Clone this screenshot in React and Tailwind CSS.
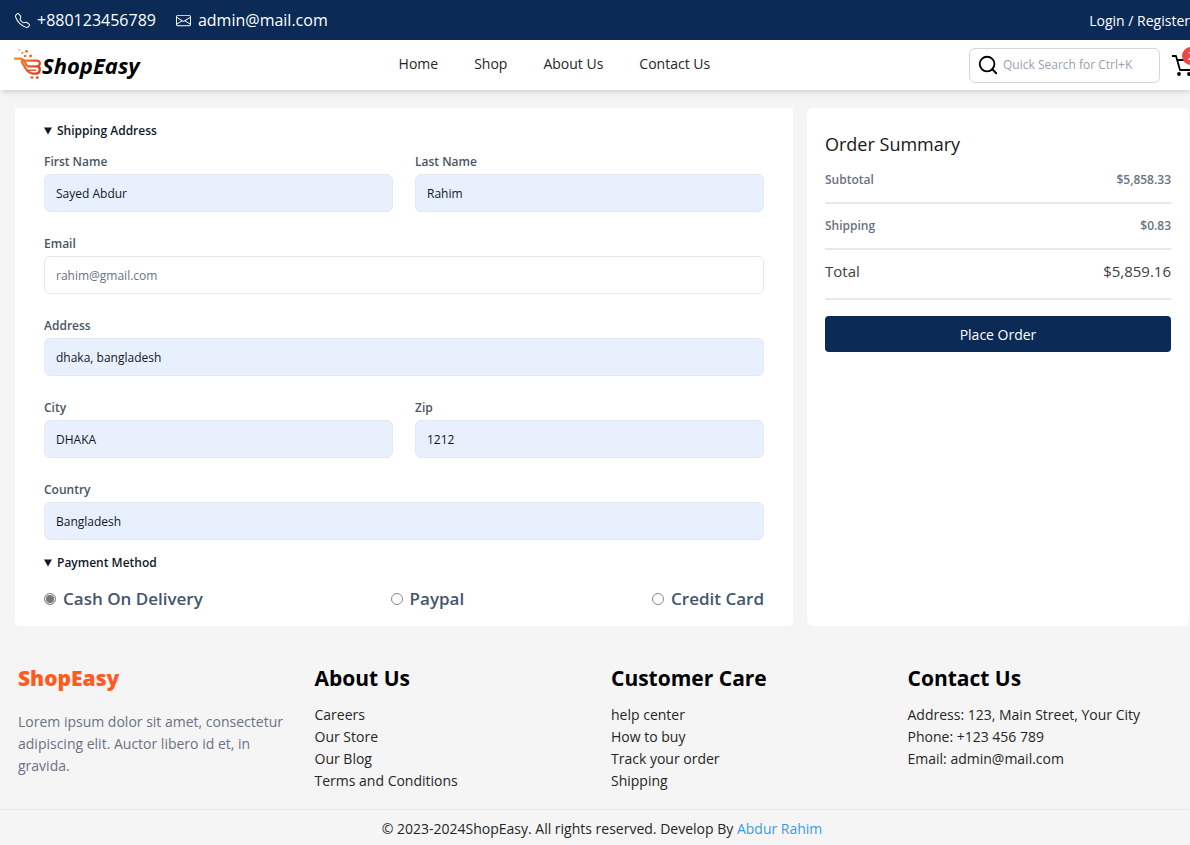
import { BsTelephone, BsEnvelope } from "react-icons/bs";
import { FiSearch } from "react-icons/fi";

const navLinks = ["Home", "Shop", "About Us", "Contact Us"];

const aboutLinks = ["Careers", "Our Store", "Our Blog", "Terms and Conditions"];
const careLinks = ["help center", "How to buy", "Track your order", "Shipping"];
const contactLines = [
  "Address: 123, Main Street, Your City",
  "Phone: +123 456 789",
  "Email: admin@mail.com",
];

function LogoMark() {
  return (
    <svg viewBox="0 0 28 32" className="h-8 w-7 shrink-0" fill="none" aria-hidden="true">
      <defs>
        <linearGradient id="cart" x1="0" y1="0" x2="28" y2="16" gradientUnits="userSpaceOnUse">
          <stop offset="0" stopColor="#f9a01e" />
          <stop offset="1" stopColor="#e63a24" />
        </linearGradient>
      </defs>
      <path
        d="M0 9.6H6.5C9 9.8 10.2 11.6 11.4 14L13 17"
        stroke="url(#cart)"
        strokeWidth="2.4"
      />
      <path
        d="M7 11.6H22.5C25.4 11.6 26 13.2 25.8 14.8C25.5 16.6 24.6 17.4 23 17.4H13M23 17.4C25.4 17.8 26 19.2 25.8 21C25.4 23.6 24.2 24.6 22 24.6H19.5C15.5 24.6 13.6 22.6 11.6 19.4L7.2 12"
        stroke="url(#cart)"
        strokeWidth="2.2"
        strokeLinejoin="round"
      />
      <path d="M14 21.2H22" stroke="url(#cart)" strokeWidth="1.4" />
      <circle cx="18" cy="28.6" r="1.4" fill="#f0602a" />
      <circle cx="23.2" cy="28.6" r="1.4" fill="#e8452a" />
      <circle cx="11.2" cy="7" r="1.3" fill="#f0702a" />
      <circle cx="16.6" cy="7" r="1.4" fill="#ee5f2a" />
      <circle cx="8.4" cy="3.8" r="1.1" fill="#f08a2a" />
      <circle cx="12.6" cy="2.4" r="1.4" fill="#ee6a2a" />
      <circle cx="5.4" cy="0.9" r="0.8" fill="#f08a4a" />
    </svg>
  );
}

function CartIcon() {
  return (
    <svg viewBox="0 0 24 24" className="size-6" fill="none" stroke="#000000" strokeWidth="1.8" aria-hidden="true">
      <path d="M0 3H4L8 17H20.5L23 7H5.5" strokeLinejoin="round" />
      <circle cx="7" cy="21" r="1.9" fill="#000000" stroke="none" />
      <circle cx="17" cy="21" r="1.9" fill="#000000" stroke="none" />
    </svg>
  );
}

function Field({ id, label, value, plain = false, wide = false, type = "text" }) {
  return (
    <div className={wide ? "col-span-2" : ""}>
      <label htmlFor={id} className="mb-[3px] block text-[12px] leading-[18px] font-semibold text-gray-600">
        {label}
      </label>
      <input
        id={id}
        type={type}
        defaultValue={value}
        className={
          plain
            ? "block h-[38px] w-full rounded-md border border-gray-200 bg-white px-[11px] text-[12px] text-gray-500"
            : "block h-[38px] w-full rounded-md border border-[#e2e8f2] bg-[#e8f0fe] px-[11px] text-[12px] text-gray-900"
        }
      />
    </div>
  );
}

function Payment({ id, label, checked }) {
  return (
    <div className="flex items-center gap-[7px]">
      <input
        id={id}
        type="radio"
        name="payment"
        defaultChecked={checked}
        className="size-3 appearance-none rounded-full border border-[#8a8a8a] bg-white checked:bg-[#767676] checked:shadow-[inset_0_0_0_1px_#ffffff]"
      />
      <label htmlFor={id} className="text-[17px] leading-7 font-semibold text-slate-600">
        {label}
      </label>
    </div>
  );
}

function Marker() {
  return (
    <svg viewBox="0 0 8 8" className="size-2" aria-hidden="true">
      <path d="M0 0.5H8L4 7.5Z" fill="#111827" />
    </svg>
  );
}

function Section({ title, className, children }) {
  return (
    <details open className={className}>
      <summary className="flex list-none items-center gap-[5px] text-[12px] leading-5 font-semibold text-gray-900">
        <Marker />
        {title}
      </summary>
      {children}
    </details>
  );
}

function SummaryRow({ label, value }) {
  return (
    <div className="flex justify-between border-b-2 border-gray-200 py-[13px] text-[12px] leading-[18px] font-semibold text-gray-500">
      <span>{label}</span>
      <span>{value}</span>
    </div>
  );
}

function FooterLinks({ title, items }) {
  return (
    <div>
      <h2 className="text-[21px] leading-[30px] font-bold text-black">{title}</h2>
      <ul className="mt-[11px] text-[14px] leading-[22px] text-neutral-800">
        {items.map((item) => (
          <li key={item}>
            <a href="#">{item}</a>
          </li>
        ))}
      </ul>
    </div>
  );
}

export default function App() {
  return (
    <div className="min-h-screen overflow-x-hidden bg-[#f5f5f5] font-['Open_Sans',sans-serif] text-gray-900">
      <div className="flex h-10 items-center justify-between bg-[#0b2a55] pl-[15px] text-white">
        <div className="flex items-center gap-5 text-[16px]">
          <a href="tel:+880123456789" className="flex items-center gap-[7px]">
            <BsTelephone className="size-[15px]" />
            +880123456789
          </a>
          <a href="mailto:admin@mail.com" className="flex items-center gap-[7px]">
            <BsEnvelope className="size-[15px]" />
            admin@mail.com
          </a>
        </div>
        <a href="#" className="text-[14px]">
          Login / Register
        </a>
      </div>

      <header className="relative flex h-[50px] items-center justify-between bg-white pl-[14px] shadow-md">
        <a href="#" className="flex items-center">
          <LogoMark />
          <span className="text-[22px] font-bold text-black italic">ShopEasy</span>
        </a>
        <nav className="flex gap-9 pb-[3px] text-[14px] text-neutral-800">
          {navLinks.map((link) => (
            <a key={link} href="#">
              {link}
            </a>
          ))}
        </nav>
        <div className="-mr-2 flex w-[229px] items-center gap-3">
          <div className="flex h-[35px] w-[191px] shrink-0 items-center gap-1 rounded-md border border-gray-300 px-[7px]">
            <FiSearch className="size-[22px] shrink-0 text-black" />
            <input
              type="search"
              aria-label="Search"
              placeholder="Quick Search for Ctrl+K"
              className="w-full min-w-0 text-[12px] outline-none placeholder:text-gray-400"
            />
          </div>
          <button type="button" aria-label="Cart" className="relative shrink-0">
            <CartIcon />
            <span className="absolute -top-[6px] left-[10px] flex size-[18px] items-center justify-center rounded-full bg-[#ef4444] text-[11px] text-white">
              2
            </span>
          </button>
        </div>
      </header>

      <main className="grid grid-cols-[778fr_382fr] gap-[14px] pt-[18px] pr-px pl-[15px]">
        <form className="rounded bg-white px-[29px] py-[13px]">
          <Section title="Shipping Address">
            <div className="mt-3 grid grid-cols-2 gap-x-[22px] gap-y-[23px]">
              <Field id="first" label="First Name" value="Sayed Abdur" />
              <Field id="last" label="Last Name" value="Rahim" />
              <Field id="email" type="email" label="Email" value="rahim@gmail.com" plain wide />
              <Field id="address" label="Address" value="dhaka, bangladesh" wide />
              <Field id="city" label="City" value="DHAKA" />
              <Field id="zip" label="Zip" value="1212" />
              <Field id="country" label="Country" value="Bangladesh" wide />
            </div>
          </Section>
          <Section title="Payment Method" className="mt-[13px]">
            <div className="mt-3 flex justify-between">
              <Payment id="cash" label="Cash On Delivery" checked />
              <Payment id="paypal" label="Paypal" />
              <Payment id="card" label="Credit Card" />
            </div>
          </Section>
        </form>

        <aside className="rounded-md bg-white px-[18px] pt-[22px]">
          <h2 className="text-[18px] leading-7 font-medium text-neutral-900">Order Summary</h2>
          <SummaryRow label="Subtotal" value="$5,858.33" />
          <SummaryRow label="Shipping" value="$0.83" />
          <div className="flex justify-between border-b-2 border-gray-200 pt-[10px] pb-4 text-[15px] leading-[22px] font-medium text-neutral-700">
            <span>Total</span>
            <span>$5,859.16</span>
          </div>
          <button type="button" className="mt-4 h-9 w-full rounded-sm bg-[#0b2a55] text-[14px] text-white">
            Place Order
          </button>
        </aside>
      </main>

      <footer className="pt-[37px]">
        <div className="grid grid-cols-4 gap-8 px-[18px] pb-[17px]">
          <div>
            <h2 className="text-[21px] leading-[30px] font-extrabold text-[#ff5a1f]">ShopEasy</h2>
            <p className="mt-[18px] -mr-4 text-[14px] leading-[22px] text-gray-500">
              Lorem ipsum dolor sit amet, consectetur adipiscing elit. Auctor libero id et, in gravida.
            </p>
          </div>
          <FooterLinks title="About Us" items={aboutLinks} />
          <FooterLinks title="Customer Care" items={careLinks} />
          <div>
            <h2 className="text-[21px] leading-[30px] font-bold text-black">Contact Us</h2>
            <address className="mt-[11px] text-[14px] leading-[22px] text-neutral-800 not-italic">
              {contactLines.map((line) => (
                <p key={line}>{line}</p>
              ))}
            </address>
          </div>
        </div>
        <p className="border-t border-gray-200 pt-2 pb-[5px] pl-[14px] text-center text-[14px] leading-[22px] text-neutral-800">
          © 2023-2024ShopEasy. All rights reserved. Develop By{" "}
          <a href="#" className="text-[#3b9ddd]">
            Abdur Rahim
          </a>
        </p>
      </footer>
    </div>
  );
}
